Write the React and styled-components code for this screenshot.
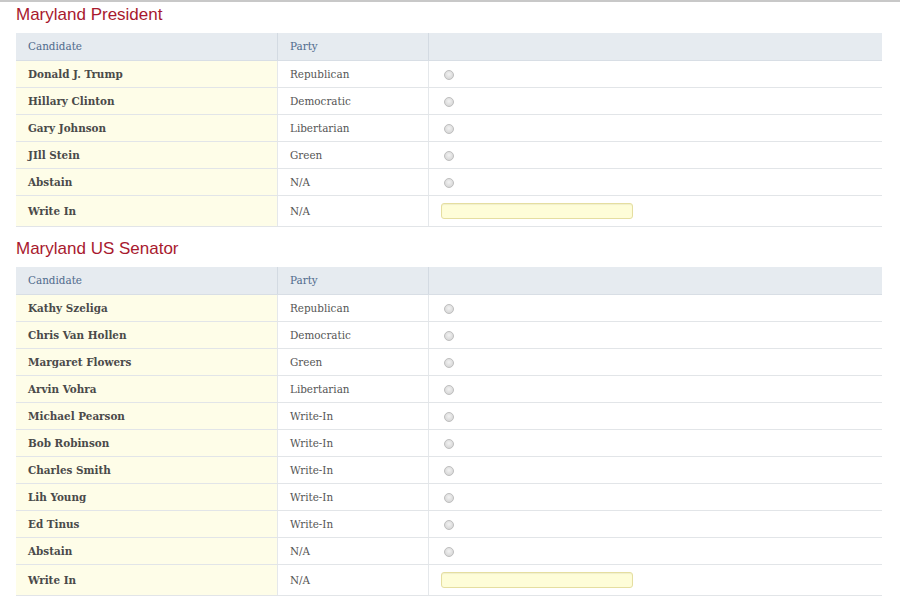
import React from 'react';
import styled, { createGlobalStyle } from 'styled-components';

const Global = createGlobalStyle`
    html, body {
        margin: 0;
        padding: 0;
        background: #ffffff;
    }
    body {
        border-top: 2px solid #c8c8c8;
    }
`;

const Page = styled.div`
    padding: 0 18px 0 16px;
    font-family: "DejaVu Serif", Georgia, serif;
`;

const Title = styled.h2`
    margin: 0;
    height: 31px;
    line-height: 26px;
    font-family: "Liberation Sans", Arial, sans-serif;
    font-size: 17px;
    font-weight: normal;
    color: #a8192e;
`;

const Table = styled.table`
    width: 866px;
    border-collapse: collapse;
    margin-bottom: 9px;
    font-size: 10.4px;
`;

const Head = styled.th`
    height: 26px;
    padding: 0 0 1px 12px;
    text-align: left;
    font-weight: normal;
    color: #4f6a8c;
    background: #e6ebf0;
    border-left: 1px solid #d3dae2;
    border-bottom: 1px solid #d8dee5;
    width: ${p => p.$w || 'auto'};
    &:first-child { border-left: none; }
`;

const Cell = styled.td`
    height: ${p => (p.$tall ? '29px' : '25px')};
    padding: 0 0 1px 12px;
    border-bottom: 1px solid #e2e5e8;
    border-left: 1px solid #e5e8eb;
    color: #555555;
    &:first-child { border-left: none; }
`;

const NameCell = styled(Cell)`
    background: #fefde8;
    font-weight: bold;
    color: #4a4a4a;
`;

const Radio = styled.span`
    display: inline-block;
    margin-left: 3px;
    width: 8px;
    height: 8px;
    border-radius: 50%;
    border: 1px solid #bfbfbf;
    background: radial-gradient(circle at 50% 40%, #f2f2f2, #d0d0d0);
    vertical-align: middle;
`;

const WriteIn = styled.input`
    display: block;
    width: 192px;
    height: 16px;
    padding: 0;
    box-sizing: border-box;
    border: 1px solid #e5dea0;
    border-radius: 3px;
    background: #fefdd8;
    box-shadow: inset 0 1px 1px rgba(0, 0, 0, 0.06);
`;

const races = [
    {
        title: 'Maryland President',
        rows: [
            ['Donald J. Trump', 'Republican'],
            ['Hillary Clinton', 'Democratic'],
            ['Gary Johnson', 'Libertarian'],
            ['JIll Stein', 'Green'],
            ['Abstain', 'N/A'],
        ],
    },
    {
        title: 'Maryland US Senator',
        rows: [
            ['Kathy Szeliga', 'Republican'],
            ['Chris Van Hollen', 'Democratic'],
            ['Margaret Flowers', 'Green'],
            ['Arvin Vohra', 'Libertarian'],
            ['Michael Pearson', 'Write-In'],
            ['Bob Robinson', 'Write-In'],
            ['Charles Smith', 'Write-In'],
            ['Lih Young', 'Write-In'],
            ['Ed Tinus', 'Write-In'],
            ['Abstain', 'N/A'],
        ],
    },
];

function Race({ title, rows }) {
    return (
        <>
            <Title>{title}</Title>
            <Table>
                <thead>
                    <tr>
                        <Head $w="249px">Candidate</Head>
                        <Head $w="138px">Party</Head>
                        <Head />
                    </tr>
                </thead>
                <tbody>
                    {rows.map(([name, party]) => (
                        <tr key={name}>
                            <NameCell>{name}</NameCell>
                            <Cell>{party}</Cell>
                            <Cell><Radio /></Cell>
                        </tr>
                    ))}
                    <tr>
                        <NameCell $tall>Write In</NameCell>
                        <Cell $tall>N/A</Cell>
                        <Cell $tall><WriteIn type="text" /></Cell>
                    </tr>
                </tbody>
            </Table>
        </>
    );
}

export default function App() {
    return (
        <Page>
            <Global />
            {races.map(r => <Race key={r.title} {...r} />)}
        </Page>
    );
}
